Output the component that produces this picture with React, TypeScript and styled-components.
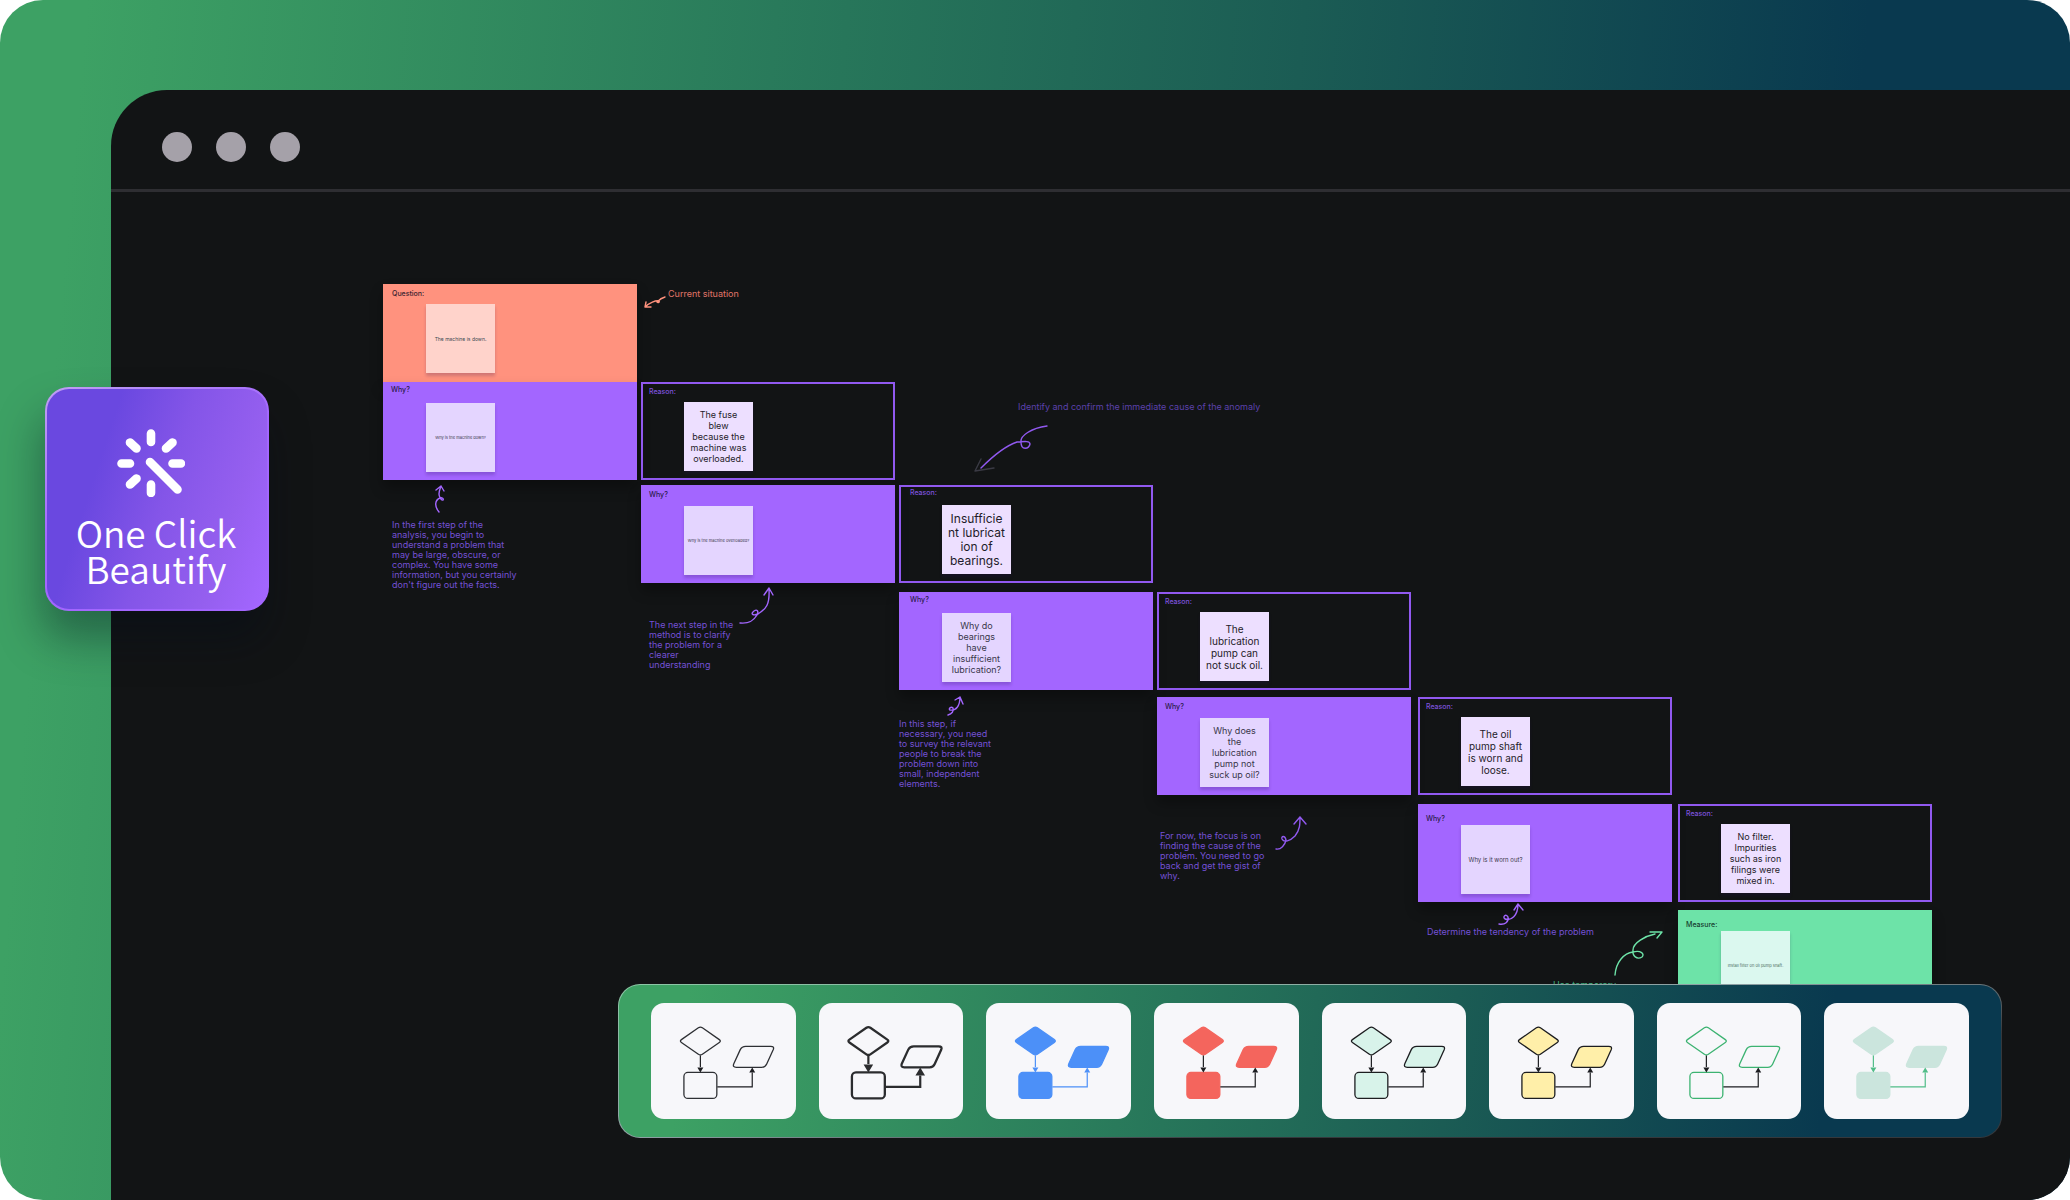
import React from "react";
import styled, { createGlobalStyle } from "styled-components";

const sans = `Inter, "Liberation Sans", sans-serif`;

const GlobalStyle = createGlobalStyle`
  *, *::before, *::after { box-sizing: border-box; }
  body { margin: 0; background: #ffffff; font-family: ${sans}; }
`;

const Scene = styled.main`
  position: relative;
  display: flex;
  min-height: 100vh;
  padding: 90px 0 0 111px;
  border-radius: 43px;
  overflow: hidden;
  background: linear-gradient(95deg, #3da164 4%, #27765a 39%, #1b5c54 60%, #09394f 86%);
`;

const Window = styled.section`
  position: relative;
  flex: 1;
  display: flex;
  flex-direction: column;
  min-width: 0;
  border-top-left-radius: 56px;
  background: #121415;
`;

const TitleBar = styled.header`
  display: flex;
  align-items: center;
  gap: 24px;
  height: 102px;
  padding: 15px 51px 0;
  border-bottom: 3px solid #2e2e32;
`;

const Dot = styled.span`
  width: 30px;
  height: 30px;
  border-radius: 50%;
  background: #a5a1a9;
`;

const Board = styled.div`
  position: relative;
  flex: 1;
`;

type Tone = "question" | "why" | "reason" | "measure";

const tones: Record<Tone, { fill: string; line: string; label: string; note: string; ink: string }> = {
  question: { fill: "#ff927e", line: "#ff927e", label: "#3b2430", note: "#ffd3cb", ink: "#3a4a52" },
  why: { fill: "#a366ff", line: "#a366ff", label: "#2c1b4c", note: "#e4d5ff", ink: "#39374a" },
  reason: { fill: "transparent", line: "#9159f0", label: "#7d52dc", note: "#eddfff", ink: "#1f1c2a" },
  measure: { fill: "#6de3a8", line: "#6de3a8", label: "#17402f", note: "#dbf8ef", ink: "#4c6e62" },
};

const Panel = styled.article<{ $x: number; $y: number; $tone: Tone }>`
  position: absolute;
  left: ${(p) => p.$x}px;
  top: ${(p) => p.$y}px;
  width: 254px;
  height: 98px;
  border: 2px solid ${(p) => tones[p.$tone].line};
  background: ${(p) => tones[p.$tone].fill};
  box-shadow: ${(p) => (p.$tone === "reason" ? "none" : "0 8px 12px rgba(0, 0, 0, 0.3)")};
`;

const PanelLabel = styled.h3<{ $x: number; $y: number; $tone: Tone }>`
  position: absolute;
  left: ${(p) => p.$x}px;
  top: ${(p) => p.$y}px;
  margin: 0;
  font: 500 7px/8px ${sans};
  color: ${(p) => tones[p.$tone].label};
`;

const Sticky = styled.p<{ $tone: Tone; $size: number; $line: number }>`
  display: flex;
  align-items: center;
  justify-content: center;
  width: 69px;
  height: 69px;
  margin: ${(p) => (p.$tone === "reason" || p.$tone === "question" ? 18 : 19)}px 0 0 41px;
  background: ${(p) => tones[p.$tone].note};
  box-shadow: 0 3px 3px rgba(40, 20, 80, 0.22);
  font-size: ${(p) => p.$size}px;
  line-height: ${(p) => p.$line}px;
  color: ${(p) => tones[p.$tone].ink};
  text-align: center;
  white-space: pre;
`;

const Note = styled.p<{ $x: number; $y: number; $color: string }>`
  position: absolute;
  left: ${(p) => p.$x}px;
  top: ${(p) => p.$y}px;
  margin: 0;
  font-size: 9px;
  line-height: 10px;
  color: ${(p) => p.$color};
  white-space: pre;
`;

const Doodle = styled.svg<{ $x: number; $y: number }>`
  position: absolute;
  left: ${(p) => p.$x}px;
  top: ${(p) => p.$y}px;
  overflow: visible;
  fill: none;
  stroke-width: 1.4;
  stroke-linecap: round;
  stroke-linejoin: round;
`;

const StyleBar = styled.nav`
  position: absolute;
  right: 68px;
  bottom: 62px;
  left: 507px;
  display: flex;
  gap: 23px;
  padding: 18px 32px;
  border: 1px solid transparent;
  border-radius: 22px;
  background:
    linear-gradient(97deg, #3da164 5%, #27765a 40%, #1b5c54 60%, #09394f 87%) padding-box,
    linear-gradient(172deg, #8cc7a6 0%, #8fa0a4 45%, #35383c 70%) border-box;
`;

const Tile = styled.button`
  flex: 1;
  height: 116px;
  padding: 0;
  border: 0;
  border-radius: 13px;
  background: #f7f7fa;
  cursor: pointer;

  svg { display: block; width: 100%; height: 100%; }
`;

const BeautifyButton = styled.button`
  position: absolute;
  left: 45px;
  top: 387px;
  display: flex;
  flex-direction: column;
  align-items: center;
  gap: 17px;
  width: 224px;
  height: 224px;
  padding: 40px 2px 0 0;
  border: 2px solid transparent;
  border-radius: 24px;
  background:
    linear-gradient(108deg, #6a48e0 26%, #8455e8 52%, #955fef 78%, #a366ff 98%) padding-box,
    linear-gradient(150deg, #bfa0f2 0%, #a366ff 45%, #a366ff 100%) border-box;
  box-shadow: -4px 28px 44px rgba(2, 12, 24, 0.36);
  color: #ffffff;
  font: 350 37px/36px "Noto Sans CJK SC", "Noto Sans", sans-serif;
  text-align: center;
  white-space: pre-line;
  cursor: pointer;

  svg { margin-right: 10px; }
`;

const BurstIcon = () => (
  <svg width="68" height="68" viewBox="0 0 68 68" fill="none" stroke="#fff" strokeWidth="8.6" strokeLinecap="round" aria-hidden="true">
    <path d="M34 4.500V13M34 55.500V64M4.500 34.500H13M55.500 34.500H64M13 13.500L19.500 19.500M55.500 13.500L49 19.500M13 55.500L19.500 49.500M33 33L60.500 60.500" />
  </svg>
);

type PanelData = {
  x: number;
  y: number;
  tone: Tone;
  label: string;
  lx: number;
  ly: number;
  text: string;
  size: number;
  line: number;
};

const panels: PanelData[] = [
  { x: 272, y: 92, tone: "question", label: "Question:", lx: 7, ly: 4, text: "The machine is down.", size: 5, line: 6 },
  { x: 272, y: 190, tone: "why", label: "Why?", lx: 6, ly: 2, text: "Why is the machine down?", size: 4, line: 6 },
  { x: 530, y: 190, tone: "reason", label: "Reason:", lx: 6, ly: 4, text: "The fuse\nblew\nbecause the\nmachine was\noverloaded.", size: 9, line: 11 },
  { x: 530, y: 293, tone: "why", label: "Why?", lx: 6, ly: 4, text: "Why is the machine overloaded?", size: 4, line: 6 },
  { x: 788, y: 293, tone: "reason", label: "Reason:", lx: 9, ly: 2, text: "Insufficie\nnt lubricat\nion of\nbearings.", size: 12, line: 14 },
  { x: 788, y: 400, tone: "why", label: "Why?", lx: 9, ly: 2, text: "Why do\nbearings\nhave\ninsufficient\nlubrication?", size: 9, line: 11 },
  { x: 1046, y: 400, tone: "reason", label: "Reason:", lx: 6, ly: 4, text: "The\nlubrication\npump can\nnot suck oil.", size: 10, line: 12 },
  { x: 1046, y: 505, tone: "why", label: "Why?", lx: 6, ly: 4, text: "Why does\nthe\nlubrication\npump not\nsuck up oil?", size: 9, line: 11 },
  { x: 1307, y: 505, tone: "reason", label: "Reason:", lx: 6, ly: 4, text: "The oil\npump shaft\nis worn and\nloose.", size: 10, line: 12 },
  { x: 1307, y: 612, tone: "why", label: "Why?", lx: 6, ly: 9, text: "Why is it worn out?", size: 6, line: 8 },
  { x: 1567, y: 612, tone: "reason", label: "Reason:", lx: 6, ly: 4, text: "No filter.\nImpurities\nsuch as iron\nfilings were\nmixed in.", size: 9, line: 11 },
  { x: 1567, y: 718, tone: "measure", label: "Measure:", lx: 6, ly: 9, text: "Install filter on oil pump shaft.", size: 4, line: 6 },
];

const violet = "#7451d6";

const notes = [
  { x: 557, y: 97, color: "#e07468", text: "Current situation" },
  { x: 907, y: 210, color: "#5b41ab", text: "Identify and confirm the immediate cause of the anomaly" },
  { x: 281, y: 328, color: violet, text: "In the first step of the\nanalysis, you begin to\nunderstand a problem that\nmay be large, obscure, or\ncomplex. You have some\ninformation, but you certainly\ndon't figure out the facts." },
  { x: 538, y: 428, color: violet, text: "The next step in the\nmethod is to clarify\nthe problem for a\nclearer\nunderstanding" },
  { x: 788, y: 527, color: violet, text: "In this step, if\nnecessary, you need\nto survey the relevant\npeople to break the\nproblem down into\nsmall, independent\nelements." },
  { x: 1049, y: 639, color: violet, text: "For now, the focus is on\nfinding the cause of the\nproblem. You need to go\nback and get the gist of\nwhy." },
  { x: 1316, y: 735, color: violet, text: "Determine the tendency of the problem" },
  { x: 1442, y: 788, color: "#3fae80", text: "Use temporary" },
];

const arrows = [
  { x: 534, y: 105, w: 20, h: 12, color: "#ff927e", d: "M20 0C16 1 14 3 12 5C13 6 15 5 14 4C11 3 4 6 0 10M1 5L0 10L6 10" },
  { x: 324, y: 294, w: 10, h: 27, color: "#a366ff", d: "M4 26C-1 20 0 14 5 12C7 11 9 13 8 14C6 15 4 10 4 8C4 5 5 3 6 0M1 4L6 0L9 5" },
  { x: 629, y: 396, w: 33, h: 36, color: "#a366ff", d: "M0 35C10 36 14 32 17 27C19 23 17 21 14 23C10 26 13 28 18 26C26 21 30 17 29 0M24 7L29 0L33 7" },
  { x: 837, y: 505, w: 15, h: 18, color: "#a366ff", d: "M0 18C4 17 6 14 5 11C3 9 0 12 2 13C8 14 12 9 12 0M7 3L12 0L15 7" },
  { x: 870, y: 234, w: 66, h: 34, color: "#9159f0", d: "M66 0C50 2 39 10 40 16C40 25 48 23 49 18C49 14 40 16 36 16C24 20 12 30 0 42" },
  { x: 864, y: 267, w: 20, h: 13, color: "#3a3a44", d: "M6 0L0 12L19 9" },
  { x: 1165, y: 625, w: 30, h: 33, color: "#9159f0", d: "M0 32C5 33 9 28 10 23C9 18 5 19 6 22C8 26 14 24 19 19C24 13 24 7 24 0M18 7L24 0L30 7" },
  { x: 1388, y: 712, w: 24, h: 21, color: "#a366ff", d: "M0 20C6 21 10 18 9 13C7 9 3 13 6 15C12 17 19 12 19 0M15 6L19 0L24 6" },
  { x: 1504, y: 740, w: 48, h: 44, color: "#6de3a8", d: "M0 43C1 30 9 21 18 20C26 18 30 22 27 25C22 28 17 24 18 18C18 11 30 4 40 2M35 0L47 0L42 6" },
];

type TileStyle = { name: string; shape: string; fill: string; line: string; weight: number; head: number };

const tileStyles: TileStyle[] = [
  { name: "Thin outline", shape: "#2e3034", fill: "none", line: "#1c1d20", weight: 1, head: 1 },
  { name: "Bold outline", shape: "#2b2c2e", fill: "none", line: "#2b2c2e", weight: 2, head: 1.6 },
  { name: "Blue", shape: "#4c90f8", fill: "#4c90f8", line: "#4c90f8", weight: 1, head: 1 },
  { name: "Red", shape: "#f4655d", fill: "#f4655d", line: "#1c1d20", weight: 1, head: 1 },
  { name: "Mint", shape: "#1c1d20", fill: "#d8f3ea", line: "#1c1d20", weight: 1, head: 1 },
  { name: "Yellow", shape: "#1c1d20", fill: "#ffefa9", line: "#1c1d20", weight: 1, head: 1 },
  { name: "Green outline", shape: "#3cb371", fill: "none", line: "#1c1d20", weight: 1, head: 1 },
  { name: "Pale green", shape: "#cbe5dd", fill: "#cbe5dd", line: "#51bd88", weight: 1, head: 1 },
];

const FlowGlyph = ({ s }: { s: TileStyle }) => {
  const hw = 3 * s.head;
  const hh = 5 * s.head;
  return (
    <svg viewBox="0 0 145 116" aria-hidden="true">
      <g fill={s.fill} stroke={s.shape} strokeWidth={s.weight + 0.3} strokeLinejoin="round">
        <path d="M47.500 24.700Q49.500 23.300 51.500 24.700L68.500 36.600Q70.500 38 68.500 39.400L51.500 51.300Q49.500 52.700 47.500 51.300L30.500 39.400Q28.500 38 30.500 36.600Z" />
        <rect x="33" y="69.500" width="33" height="26" rx="4" />
        <path d="M95 43.300H120Q124 43.300 122.500 46.800L116 61Q114.500 64.300 111 64.300H85.500Q81.500 64.300 83 60.800L89.500 46.600Q91 43.300 95 43.300Z" />
      </g>
      <path d={`M49.500 52.500V${69 - hh}M66.500 84H101.500V${64.5 + hh}`} fill="none" stroke={s.line} strokeWidth={s.weight + 0.2} />
      <path d={`M${49.5 - hw} ${69.5 - hh}H${49.5 + hw}L49.500 69.500ZM${101.5 - hw} ${64.5 + hh}H${101.5 + hw}L101.500 64.500Z`} fill={s.line} />
    </svg>
  );
};

export default function App() {
  return (
    <>
      <GlobalStyle />
      <Scene>
        <Window>
          <TitleBar>
            <Dot />
            <Dot />
            <Dot />
          </TitleBar>
          <Board>
            {panels.map((p) => (
              <Panel key={`${p.x}-${p.y}`} $x={p.x} $y={p.y} $tone={p.tone}>
                <PanelLabel $x={p.lx} $y={p.ly} $tone={p.tone}>{p.label}</PanelLabel>
                <Sticky $tone={p.tone} $size={p.size} $line={p.line}>{p.text}</Sticky>
              </Panel>
            ))}
            {notes.map((n) => (
              <Note key={n.text} $x={n.x} $y={n.y} $color={n.color}>{n.text}</Note>
            ))}
            {arrows.map((a) => (
              <Doodle key={a.d} $x={a.x} $y={a.y} width={a.w} height={a.h} stroke={a.color} aria-hidden="true">
                <path d={a.d} />
              </Doodle>
            ))}
          </Board>
          <StyleBar aria-label="Diagram styles">
            {tileStyles.map((s) => (
              <Tile key={s.name} type="button" aria-label={s.name}>
                <FlowGlyph s={s} />
              </Tile>
            ))}
          </StyleBar>
        </Window>
        <BeautifyButton type="button">
          <BurstIcon />
          <span>{"One Click\nBeautify"}</span>
        </BeautifyButton>
      </Scene>
    </>
  );
}
